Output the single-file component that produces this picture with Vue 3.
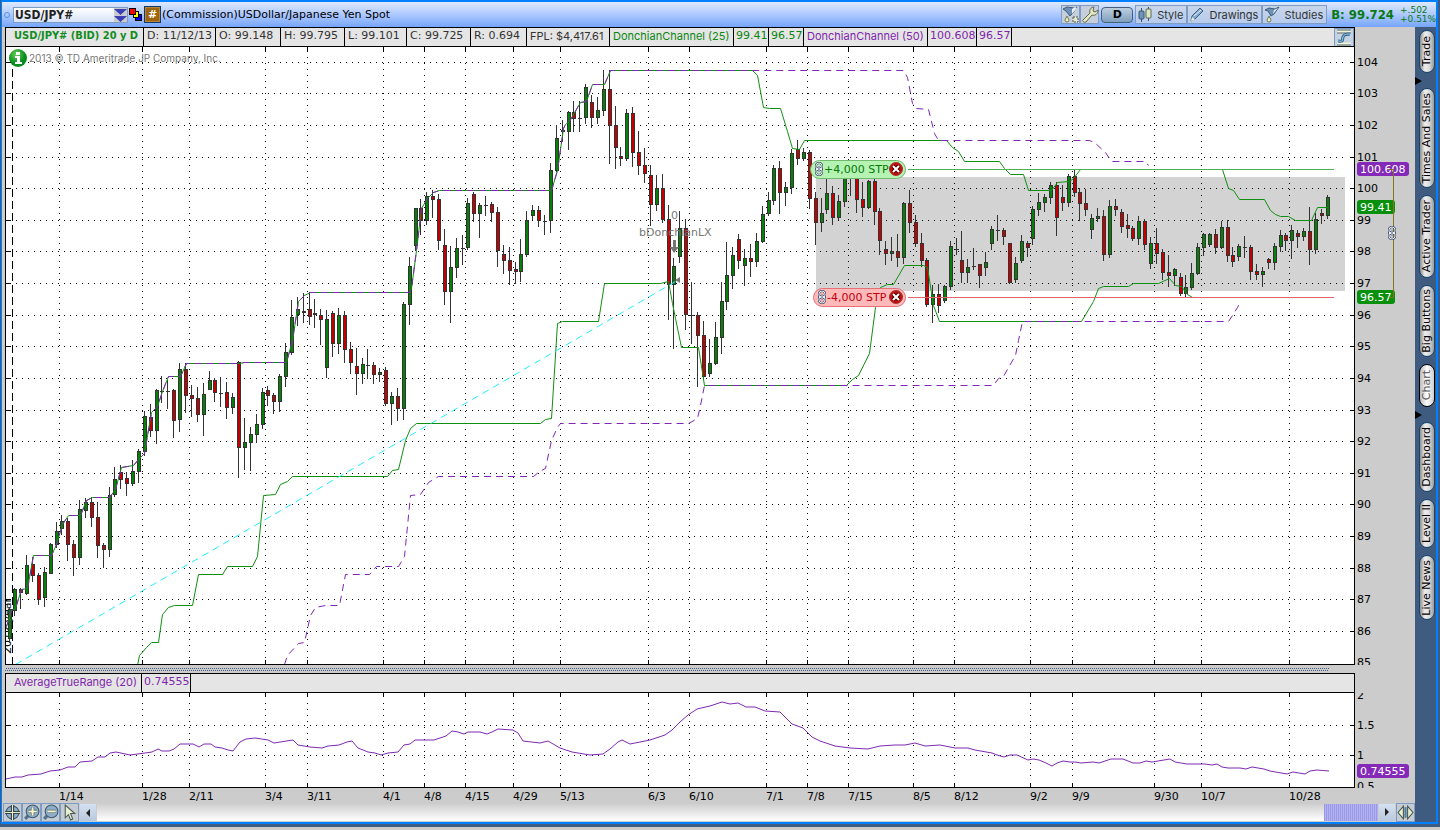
<script setup>
import { ref } from 'vue'

const symbol = ref('USD/JPY#')

const cells = [
  { text: 'USD/JPY# (BID) 20 y D', tone: 'lead' },
  { text: 'D: 11/12/13', tone: 'plain' },
  { text: 'O: 99.148', tone: 'plain' },
  { text: 'H: 99.795', tone: 'plain' },
  { text: 'L: 99.101', tone: 'plain' },
  { text: 'C: 99.725', tone: 'plain' },
  { text: 'R: 0.694', tone: 'plain' },
  { text: 'FPL: $4,417.61', tone: 'plain named' },
  { text: 'DonchianChannel (25)', tone: 'green named' },
  { text: '99.41', tone: 'green' },
  { text: '96.57', tone: 'green' },
  { text: 'DonchianChannel (50)', tone: 'purple named' },
  { text: '100.608', tone: 'purple' },
  { text: '96.57', tone: 'purple' }
]

const tabs = [
  { name: 'Trade', size: 'xs' },
  { name: 'Times And Sales', size: 'xl', arrow: true },
  { name: 'Active Trader', size: 'lg' },
  { name: 'Big Buttons', size: 'md' },
  { name: 'Chart', size: 'xs', active: true },
  { name: 'Dashboard', size: 'ml', arrow: true },
  { name: 'Level II', size: 'sm' },
  { name: 'Live News', size: 'sn' }
]

const dates = [
  [59, '1/14'], [142, '1/28'], [189, '2/11'], [265, '3/4'], [307, '3/11'], [383, '4/1'],
  [424, '4/8'], [465, '4/15'], [513, '4/29'], [560, '5/13'], [648, '6/3'], [689, '6/10'],
  [766, '7/1'], [807, '7/8'], [848, '7/15'], [913, '8/5'], [954, '8/12'], [1030, '9/2'],
  [1072, '9/9'], [1154, '9/30'], [1201, '10/7'], [1289, '10/28']
]

const prices = Array.from({ length: 20 }, (_, i) => ({
  label: 104 - i,
  y: Math.floor(62.3 + i * 31.61)
}))

// x, high, body top, body bottom, low, direction
const raw = `10 607 609 638 642 g;15 588 589 610 615 g;21 588 589 592 608 r;27 555 565 593 594 g;33 557 564 575 581 r;39 573 575 599 604 r;45 567 572 597 606 g;51 543 544 573 573 g;57 522 531 544 547 g;62 515 521 528 534 g;68 518 521 544 560 r;74 540 544 557 575 r;80 500 509 557 564 g;86 498 502 510 517 g;92 497 502 517 526 r;98 502 517 545 557 r;104 543 545 549 567 r;110 487 495 549 556 g;115 467 479 494 496 g;121 465 472 479 488 r;127 472 478 483 495 r;133 460 471 483 485 g;139 449 451 471 482 g;145 411 416 451 455 g;151 404 417 430 436 r;157 389 390 430 443 g;162 376 391 391 402 g;168 380 391 391 408 g;174 389 390 420 437 r;180 363 369 419 431 g;186 363 369 395 412 r;192 385 395 398 416 r;198 387 398 414 421 r;204 383 394 414 435 g;210 371 380 389 389 g;215 378 380 392 401 r;221 377 393 393 406 g;227 382 392 407 418 r;233 393 397 407 413 g;239 361 362 447 477 r;245 418 442 447 469 g;251 427 434 442 470 g;257 414 424 434 442 g;263 388 392 424 428 g;268 386 390 395 405 r;274 393 395 401 413 r;280 374 376 401 411 g;286 343 352 376 386 g;292 300 317 352 354 g;298 297 309 314 325 g;304 293 311 312 322 g;310 292 309 316 324 r;315 299 313 314 327 g;321 309 315 319 344 r;327 310 319 367 377 g;333 311 313 343 356 r;339 308 315 343 353 g;345 311 315 349 362 r;351 342 349 362 373 r;357 348 366 373 394 r;363 358 364 373 383 g;368 349 365 365 378 g;374 362 365 374 383 r;380 368 372 374 381 g;386 367 370 403 405 r;392 392 396 403 424 g;398 388 396 408 420 r;404 302 304 408 419 g;410 257 266 304 324 g;416 208 208 245 250 g;421 199 208 220 234 r;427 192 196 220 224 g;433 190 196 199 217 r;439 194 199 240 249 r;445 229 245 291 304 r;451 246 267 291 322 g;457 238 248 267 277 g;463 235 248 248 264 g;468 198 203 247 249 g;474 192 194 213 221 r;480 203 205 213 237 g;486 196 205 205 215 g;492 202 204 212 221 r;498 207 212 250 266 r;504 245 254 260 273 r;510 247 260 270 284 r;516 262 269 271 283 r;521 239 254 271 281 g;527 211 220 254 256 g;533 205 210 215 219 g;539 206 210 220 226 r;545 215 221 221 234 g;551 163 170 220 232 g;557 125 138 170 171 g;563 120 130 131 141 g;569 111 112 131 149 g;574 101 112 118 131 r;580 101 118 118 131 g;586 84 87 117 123 g;592 95 102 117 127 r;598 97 110 117 123 g;604 70 89 110 115 g;610 70 89 125 163 r;616 106 125 147 168 r;621 147 156 158 165 r;627 109 113 158 160 g;633 107 113 152 166 r;639 131 152 165 174 r;645 148 165 173 182 r;651 165 175 204 225 r;657 175 188 204 210 g;663 174 188 219 222 r;669 205 219 284 319 r;674 258 266 284 348 g;680 211 228 256 262 g;686 219 228 314 329 r;692 282 315 315 343 g;698 312 315 335 386 r;704 321 335 376 378 r;710 339 363 373 376 g;716 322 337 363 364 g;722 282 301 337 353 g;727 242 275 301 309 g;733 247 255 275 288 g;739 234 239 260 268 r;745 249 258 265 285 g;751 244 258 261 276 r;757 233 241 261 266 g;763 206 214 241 242 g;769 192 200 213 215 g;774 165 168 200 204 g;780 161 168 192 213 r;786 182 187 192 205 g;792 149 153 187 193 g;798 140 149 158 164 r;804 148 152 158 160 g;810 150 152 198 208 r;816 192 198 222 244 r;822 198 213 222 231 g;827 175 193 209 213 g;833 186 193 217 224 r;839 195 201 217 219 g;845 170 177 201 206 g;851 170 176 177 195 g;857 172 178 199 212 r;863 182 199 207 216 r;869 180 181 207 208 g;875 179 181 211 224 r;880 208 211 240 254 r;886 241 249 253 264 r;892 237 251 253 260 g;898 234 251 257 266 r;904 202 203 257 263 g;910 190 203 222 232 r;916 215 222 243 246 r;922 233 243 260 266 r;927 258 260 304 306 r;933 285 294 304 322 g;939 284 294 305 312 r;945 285 286 300 302 g;951 241 246 286 289 g;957 238 249 249 254 g;962 231 260 272 282 r;968 259 267 272 282 g;974 248 266 266 269 g;980 264 264 275 287 r;986 252 262 267 275 g;992 226 229 243 249 g;998 215 230 230 240 g;1004 228 230 236 244 r;1010 243 243 282 283 r;1016 257 263 279 282 g;1022 235 241 260 262 g;1028 241 243 247 256 r;1033 206 209 238 244 g;1039 193 202 209 215 g;1045 194 197 202 211 g;1051 182 185 197 203 g;1057 182 185 217 235 r;1063 185 197 202 210 r;1069 174 176 202 206 g;1075 170 176 192 196 r;1080 188 192 203 220 r;1086 189 203 209 215 r;1092 214 218 229 238 g;1098 208 216 218 221 g;1104 210 216 254 260 r;1110 200 206 254 257 g;1116 199 206 209 215 r;1122 209 212 226 232 r;1128 214 225 228 237 r;1133 226 228 238 240 r;1139 216 221 238 244 g;1145 219 221 244 249 r;1151 237 243 263 268 g;1157 228 243 253 263 r;1163 249 252 272 279 r;1169 255 272 275 286 r;1175 268 269 275 285 g;1181 273 277 293 295 r;1186 275 287 293 297 g;1192 263 273 287 289 g;1198 243 247 273 274 g;1204 233 234 247 255 g;1210 233 234 244 246 g;1216 229 234 247 253 r;1222 221 227 247 248 g;1228 220 227 255 261 r;1233 247 255 261 266 r;1239 244 246 256 260 g;1245 236 247 247 257 g;1251 245 247 271 279 r;1257 264 271 274 279 r;1263 267 271 274 286 g;1269 258 259 262 268 r;1275 243 246 262 269 g;1281 230 235 246 251 g;1286 233 235 240 250 r;1292 225 230 240 258 g;1298 230 233 236 247 r;1304 228 231 236 240 g;1310 207 231 249 264 r;1316 213 219 249 253 g;1322 209 213 215 223 r;1328 195 197 215 218 g`

const candles = raw.split(';').map((row) => {
  const [x, high, top, bottom, low, dir] = row.split(' ')
  return { x: +x, high: +high, top: +top, bottom: +bottom, low: +low, up: dir === 'g' }
})

const sharedUpper = '6,626 11,610 15,608 21,589 27,588 33,555 51,555 56,544 62,524 68,515 80,515 86,500 92,497 109,497 115,489 121,467 133,465 138,459 144,453 151,412 157,406 162,391 168,376 180,376 186,363 239,363 244,362 286,362 292,340 298,301 304,295 310,292 409,292 411,288 416,250 421,208 427,198 433,192 439,190 551,190 557,170 563,128 565,124 569,121 580,102 586,101 592,84 604,84 610,70'
const upper25 = sharedUpper + ' 752,70 757,75 763,107 769,108 780,108 787,131 792,148 799,149 804,140 946,140 952,147 958,151 964,161 999,161 1004,168 1010,174 1023,174 1028,190 1051,190 1057,182 1069,181 1073,178 1080,169 1222,169 1228,188 1233,190 1239,199 1264,199 1270,210 1275,214 1280,216 1288,216 1295,220 1311,220 1317,207 1328,207'
const upper50 = sharedUpper + ' 903,70 907,77 912,103 916,108 928,109 934,133 938,140 1089,140 1094,142 1105,152 1111,161 1145,161 1148,165'
const lower25 = '137,665 139,655 146,647 151,642 158,642 162,614 168,607 174,605 192,605 198,574 222,574 227,566 252,566 257,556 263,495 275,494 280,484 287,481 292,476 387,476 392,470 398,469 405,440 410,428 416,423 540,423 545,419 551,418 557,323 562,321 598,321 604,283 660,283 668,281 672,303 675,318 681,347 698,347 704,385 846,385 852,379 858,375 869,353 875,307 880,287 887,284 893,284 904,265 923,265 927,267 933,305 939,321 1081,321 1093,301 1098,288 1103,286 1128,286 1133,283 1158,283 1169,278 1175,285 1181,286 1187,294 1192,297'
const lower50 = '284,664 287,655 298,643 304,642 310,615 315,607 325,605 339,605 345,574 369,574 376,566 398,566 404,556 410,495 420,494 428,482 438,476 533,476 539,471 545,468 551,440 557,427 560,423 688,423 697,418 700,405 704,385 993,385 998,378 1003,376 1008,367 1015,355 1018,340 1022,321 1228,321 1232,315 1237,307 1240,301'
const atr = '6,779 15,777 22,777 28,775 41,774 50,771 60,770 68,767 75,767 80,762 92,761 98,757 105,757 110,753 116,752 130,755 145,753 152,752 158,749 162,751 169,751 174,749 180,744 193,744 199,747 204,744 211,744 215,747 222,748 228,750 233,751 240,742 246,739 255,738 268,740 274,743 293,740 298,745 310,747 322,748 328,746 339,745 347,742 352,741 358,748 368,752 375,753 381,755 388,753 398,752 404,745 410,744 415,740 434,740 446,736 452,731 458,732 464,734 468,732 480,732 487,734 492,732 498,729 513,730 518,733 523,741 540,743 548,741 560,748 572,752 590,755 603,754 610,749 618,742 622,740 630,744 640,742 650,740 665,735 672,730 680,722 688,715 697,709 710,706 722,702 730,704 738,703 746,707 755,707 765,711 780,712 792,724 803,728 812,737 820,741 835,746 850,748 868,749 880,746 895,745 905,745 915,743 925,746 940,745 955,748 968,748 975,750 992,753 997,755 1004,757 1010,755 1017,755 1028,760 1033,759 1039,760 1046,763 1052,766 1057,763 1063,761 1070,762 1075,762 1081,763 1093,762 1099,763 1111,759 1123,759 1133,763 1140,763 1146,761 1152,762 1170,759 1175,762 1187,764 1205,764 1212,765 1217,764 1222,767 1228,768 1240,768 1246,769 1252,767 1264,769 1270,771 1287,774 1293,772 1305,774 1310,771 1317,770 1329,771'
</script>

<template>
  <main class="page">
    <div class="window">
      <header class="titlebar">
        <span class="dot"></span>
        <div class="combo">
          <input v-model="symbol" aria-label="Symbol" />
          <button aria-label="Symbol list">
            <svg viewBox="0 0 13 14" width="13" height="14"><path d="M0 1h13L6.500 7zM0 8h13L6.500 14z" fill="#3a3fb4" /></svg>
          </button>
        </div>
        <button class="link-color" aria-label="Link colour">
          <svg viewBox="0 0 14 14" width="14" height="14" shape-rendering="crispEdges">
            <path d="M6.500 6.500h6v6h-6z" fill="#00f" stroke="#000" />
            <path d="M4.500 3.500h5v6h-5z" fill="#ff0" stroke="#000" />
            <path d="M.5 .5h6v6h-6z" fill="#f00" stroke="#000" />
          </svg>
        </button>
        <button class="hash" aria-label="Hash">#</button>
        <h1>(Commission)USDollar/Japanese Yen Spot</h1>
        <div class="tools">
          <button class="tool square" aria-label="Study sets">
            <svg viewBox="0 0 18 18" width="18" height="18">
              <path d="M1 3l4-2 7 1 3-1-4 6-3 3-4-5z" fill="#6d91b5" stroke="#3e5c7c" />
              <path d="M10 3l3-2 2 1-5 6z" fill="#e4eff7" /><path d="M5 10l2 4a2 2 0 1 1-4 0z" fill="#eef2cc" stroke="#6d7b56" />
              <rect x="11" y="11" width="5" height="5" fill="#dfe9cc" stroke="#555" stroke-dasharray="2 1" />
            </svg>
          </button>
          <button class="tool square" aria-label="Settings">
            <svg viewBox="0 0 18 18" width="18" height="18">
              <path d="M2 14l7-7c-1-3 1-6 4-6l-1 4 2 1 3-2c0 4-3 6-6 5l-6 7c-2 1-4-1-3-2z" fill="#e5e9c0" stroke="#5c6656" />
            </svg>
          </button>
          <button class="period">D</button>
          <button class="tool">
            <svg viewBox="0 0 16 18" width="16" height="18">
              <path d="M4.500 2v14M11.500 1v14" stroke="#3d5570" /><rect x="2" y="5" width="5" height="8" rx="1" fill="#6f95b8" stroke="#3d5570" />
              <rect x="9" y="3" width="5" height="9" rx="1" fill="#dbe8c2" stroke="#5c6656" />
            </svg>Style
          </button>
          <button class="tool">
            <svg viewBox="0 0 16 18" width="16" height="18">
              <path d="M2 15l1-5 8-8 3 3-8 8z" fill="#83aad0" stroke="#3d5f82" /><path d="M2 15l1-4 3 3z" fill="#eef2d5" /><path d="M5 10l7-6" stroke="#e5f0fa" />
            </svg>Drawings
          </button>
          <button class="tool">
            <svg viewBox="0 0 16 18" width="16" height="18">
              <path d="M1 4l4-2 6 1 4-2-5 7-3 2-3-5z" fill="#6d91b5" stroke="#3e5c7c" /><path d="M10 4l4-2-5 6z" fill="#e4eff7" />
              <path d="M5 10l2 4a2 2 0 1 1-4 0z" fill="#eef2cc" stroke="#6d7b56" />
            </svg>Studies
          </button>
        </div>
        <strong class="quote">B: 99.724</strong>
        <div class="change"><span>+.502</span><span>+0.51%</span></div>
      </header>

      <div class="body">
        <section class="chart">
          <div class="legend">
            <span v-for="(cell, i) in cells" :key="i" :class="cell.tone">{{ cell.text }}</span>
            <i></i>
            <button aria-label="Studies panel">
              <svg viewBox="0 0 18 17" width="18" height="17">
                <path d="M2 2.500h14M2 14.500h14" stroke="#f1f2d6" stroke-width="2" /><path d="M2 4h14M2 16h14M2 1h14" stroke="#64736a" />
                <path d="M3 12c6 1 4-1 5-4 1-3 4-3 7-3" fill="none" stroke="#33658d" stroke-width="3" /><path d="M3 12c6 1 4-1 5-4 1-3 4-3 7-3" fill="none" stroke="#9ed0ee" />
              </svg>
            </button>
          </div>

          <svg class="plot" viewBox="2 47 1413 619" role="img" aria-label="Daily price chart">
            <defs>
              <clipPath id="price-area"><rect x="6" y="47" width="1348" height="617" /></clipPath>
              <clipPath id="axis-area"><rect x="1355" y="47" width="60" height="618" /></clipPath>
              <radialGradient id="info" cx=".4" cy=".3"><stop offset="0" stop-color="#6ad05a" /><stop offset="1" stop-color="#078c1e" /></radialGradient>
              <symbol id="chain" viewBox="0 0 8 14">
                <rect x="1" y="1" width="6" height="7" rx="3" fill="none" stroke="#3b4766" stroke-width="2" />
                <rect x="1" y="6" width="6" height="7" rx="3" fill="none" stroke="#3b4766" stroke-width="2" />
                <rect x="1" y="1" width="6" height="7" rx="3" fill="none" stroke="#e4edf8" />
                <rect x="1" y="6" width="6" height="7" rx="3" fill="none" stroke="#e4edf8" />
                <path d="M4 4v6" stroke="#3b4766" stroke-width="2" /><path d="M4 4v6" stroke="#fff" />
              </symbol>
              <symbol id="cancel" viewBox="0 0 14 14">
                <circle cx="7" cy="7" r="6.500" fill="#c00f0f" stroke="#a33" /><path d="M4 4l6 6M10 4l-6 6" stroke="#500" stroke-width="4" /><path d="M4 4l6 6M10 4l-6 6" stroke="#fff" stroke-width="2" />
              </symbol>
            </defs>
            <path d="M6 47h1348v617h-1348z" fill="#fff" />
            <rect x="816" y="177" width="529" height="114" fill="#d3d3d3" />
            <g class="grid">
              <template v-for="p in prices.slice(0, 19)" :key="p.label">
                <path class="dots" :d="`M10 ${p.y}.5H1348`" />
                <path :d="`M6 ${p.y}.5h5M1350 ${p.y}.5h4`" />
              </template>
              <template v-for="d in dates" :key="d[0]">
                <path class="dots" :d="`M${d[0]}.500 57V658`" />
                <path :d="`M${d[0]}.500 47v5M${d[0]}.500 660v5`" />
              </template>
              <path d="M12.500 57V664" stroke-dasharray="8 4" />
            </g>
            <g clip-path="url(#price-area)">
              <text class="year" transform="translate(11 654) rotate(-90)">2012 year</text>
              <g v-for="c in candles" :key="c.x" class="candle" :class="{ up: c.up }">
                <rect class="wick" :x="c.x - 1" :y="c.high" width="1" :height="c.low - c.high + 1" />
                <rect class="frame" :x="c.x - 2" :y="c.top" width="4" :height="c.bottom - c.top + 1" />
                <rect v-if="c.bottom - c.top > 1" class="fill" :x="c.x - 1" :y="c.top + 1" width="2" :height="c.bottom - c.top - 1" />
              </g>
              <g transform="translate(.5 .5)" fill="none">
                <polyline class="channel" :points="upper25" />
                <polyline class="channel" :points="lower25" />
                <polyline class="channel wide" :points="upper50" />
                <polyline class="channel wide" :points="lower50" />
                <path class="trend" d="M15 664L675 281" />
              </g>
              <path d="M908 169.500H1334" stroke="#4fae4f" />
              <path d="M908 297.500H1334" stroke="#e06468" />
            </g>
            <g class="note">
              <text x="671" y="219">0</text>
              <text x="639" y="236">bDonchianLX</text>
              <path d="M673 240h3v7h3l-5 6-4-6h3zM675 280l5-3v6z" />
            </g>
            <circle cx="18" cy="58" r="9" fill="url(#info)" />
            <path d="M16 52h4v3h-4zM15 56h5v6h2v2h-7v-2h2v-4h-2z" fill="#fff" />
            <text class="copyright" x="29" y="62">2013 © TD Ameritrade JP Company, Inc.</text>

            <g class="pill buy">
              <rect x="810.500" y="160.500" width="95" height="18" rx="9" />
              <use href="#chain" x="815" y="162" width="8" height="14" /><text x="824" y="173">+4,000 STP</text>
              <use href="#cancel" x="889" y="162" width="14" height="14" />
            </g>
            <g class="pill sell">
              <rect x="813.500" y="288.500" width="92" height="18" rx="9" />
              <use href="#chain" x="818" y="290" width="8" height="14" /><text x="827" y="301">-4,000 STP</text>
              <use href="#cancel" x="889" y="290" width="14" height="14" />
            </g>

            <path class="edge" d="M5.500 47V664.500H1354.500V47" />
            <g clip-path="url(#axis-area)">
              <text v-for="p in prices" :key="p.label" x="1357" :y="p.y + 4">{{ p.label }}</text>
            </g>
            <g class="tag purple-tag"><rect x="1357" y="162" width="52" height="14" rx="3" /><text x="1360" y="173">100.608</text></g>
            <g class="tag"><rect x="1357" y="200" width="38" height="14" rx="3" /><text x="1360" y="211">99.41</text></g>
            <g class="tag"><rect x="1357" y="290" width="38" height="14" rx="3" /><text x="1360" y="301">96.57</text></g>
            <path d="M1389 169.500h4.500V297.500h-4.500" fill="none" stroke="#84741c" />
            <use href="#chain" x="1388" y="226" width="8" height="14" />
          </svg>

          <div class="splitter"></div>
          <div class="legend atr-legend">
            <span class="named">AverageTrueRange (20)</span><span>0.74555</span>
          </div>
          <svg class="plot" viewBox="2 693 1413 110" role="img" aria-label="Average true range">
            <defs><clipPath id="atr-axis"><rect x="1355" y="693" width="60" height="95" /></clipPath></defs>
            <path d="M6 693h1348v94h-1348z" fill="#fff" />
            <g class="grid">
              <template v-for="y in [725, 755]" :key="y">
                <path class="dots" :d="`M10 ${y}.5H1348`" /><path :d="`M6 ${y}.5h5M1350 ${y}.5h4`" />
              </template>
              <template v-for="d in dates" :key="d[0]">
                <path class="dots" :d="`M${d[0]}.500 703V780`" /><path :d="`M${d[0]}.500 693v4M${d[0]}.500 783v4`" />
              </template>
            </g>
            <polyline class="atr-line" :points="atr" />
            <path class="edge" d="M5.500 693V787.500H1354.500V693" />
            <g clip-path="url(#atr-axis)">
              <text x="1357" y="699">2</text><text x="1357" y="729">1.5</text><text x="1357" y="759">1</text><text x="1357" y="790">0.5</text>
            </g>
            <g class="tag purple-tag"><rect x="1357" y="764" width="52" height="14" rx="3" /><text x="1360" y="775">0.74555</text></g>
            <text v-for="d in dates" :key="d[0]" :x="d[0]" y="800">{{ d[1] }}</text>
          </svg>

          <footer class="bottom">
            <button class="nav" aria-label="Crosshair"><svg viewBox="0 0 16 16" width="17" height="17"><circle cx="8" cy="8" r="6" fill="#8dadc8" stroke="#3e5a74" /><path d="M8 1v14M1 8h14" stroke="#344" stroke-width="3" /><path d="M8 1v14M1 8h14" stroke="#e9efc8" /></svg></button>
            <button class="nav" aria-label="Zoom in"><svg viewBox="0 0 16 16" width="17" height="17"><path d="M2 14l3-3" stroke="#52718d" stroke-width="3" /><circle cx="9" cy="7" r="6" fill="#8dadc8" stroke="#3e5a74" /><path d="M9 3v8M5 7h8" stroke="#344" stroke-width="3" /><path d="M9 3v8M5 7h8" stroke="#f3f6d5" stroke-width="2" /></svg></button>
            <button class="nav" aria-label="Zoom out"><svg viewBox="0 0 16 16" width="17" height="17"><path d="M2 14l3-3" stroke="#52718d" stroke-width="3" /><circle cx="9" cy="7" r="6" fill="#8dadc8" stroke="#3e5a74" /><path d="M5 7h8" stroke="#344" stroke-width="3" /><path d="M5 7h8" stroke="#f3f6d5" stroke-width="2" /></svg></button>
            <button class="nav" aria-label="Pointer"><svg viewBox="0 0 16 16" width="17" height="17"><path d="M4 1v12l3-3 2 5 2-1-2-5h4z" fill="#e6efd2" stroke="#4c5a52" /></svg></button>
            <button class="scroll" aria-label="Scroll left"><svg viewBox="0 0 16 16" width="16" height="16"><path d="M10 4v8L6 8z" fill="#222" /></svg></button>
            <div class="track"><div class="thumb"></div></div>
            <button class="scroll" aria-label="Scroll right"><svg viewBox="0 0 16 16" width="16" height="16"><path d="M6 3v8l4-4z" fill="#222" /></svg></button>
            <button class="nav" aria-label="Expand"><svg viewBox="0 0 16 16" width="17" height="17"><path d="M6 2v12L1 8zM10 2v12l5-6z" fill="#e6efd2" stroke="#45544a" /><path d="M8 3v10" stroke="#4f7da5" stroke-width="2" /></svg></button>
          </footer>
        </section>

        <nav class="sidebar">
          <button v-for="t in tabs" :key="t.name" :class="[t.size, { active: t.active, arrow: t.arrow }]"><span>{{ t.name }}</span></button>
        </nav>
      </div>
    </div>
  </main>
</template>

<style>
body { margin: 0; background: #ccc; }
</style>

<style scoped>
* { box-sizing: border-box; }
.page { font: 11px/14px "DejaVu Sans", sans-serif; color: #000; padding-bottom: 3px; background: #ccc; }
.window { border: solid #3f5b80; border-width: 0 2px 3px 1px; }
button { font: inherit; color: inherit; padding: 0; border: 0; background: none; }
button svg { display: block; flex: none; }
.titlebar {
  display: flex; align-items: center; height: 27px; padding: 0 0 0 2px;
  border: solid #0080ff; border-width: 2px 2px 0 1px;
  background: linear-gradient(#dee9ff, #b3ccff 45%, #76a5fb);
}
.dot { width: 6px; height: 6px; border: 1px solid #4f94e0; border-radius: 50%; margin-right: 3px; }
.combo { display: flex; width: 115px; height: 16px; border: 1px solid #7c9cc6; background: linear-gradient(#fff, #d7e3f8); }
.combo input { width: 100px; min-width: 0; padding: 0 1px; border: 0; background: none; font: bold 12px/14px "DejaVu Sans Condensed", "DejaVu Sans", sans-serif; color: #222; }
.combo button { width: 13px; background: #c8cbd0; }
.link-color { margin: 0 1px; }
.hash { width: 17px; height: 17px; border: 1px solid #0d3a70; background: #9d650f; color: #fff; font-weight: bold; box-shadow: inset 0 0 0 1px #b88535; }
h1 { flex: 1; margin: 0 0 0 1px; font-size: 11px; font-weight: normal; white-space: nowrap; }
.tools { display: flex; align-items: center; height: 19px; }
.tool { display: flex; align-items: center; height: 19px; padding: 0 3px 0 1px; gap: 4px; border: 1px solid #7e9cc4; background: linear-gradient(#c9d6e8, #b6cbee); font: 11px/14px Inter, "DejaVu Sans", sans-serif; color: #333; }
.tool.square { width: 19px; padding: 0; background: #c6cedb; }
.period { width: 32px; height: 16px; margin: 0 2px; border: 1px solid #42607e; border-radius: 4px; background: linear-gradient(#bccfe0, #819fbc); font-weight: bold; }
.quote { margin-left: 4px; font: bold 13px/16px "DejaVu Sans Condensed", "DejaVu Sans", sans-serif; color: #087a12; white-space: nowrap; }
.change { display: flex; flex-direction: column; width: 36px; margin-left: 6px; font-size: 9px; line-height: 9px; color: #087a12; white-space: nowrap; }
.body { display: flex; border: solid #0080ff; border-width: 0 2px 2px 1px; }
.chart { flex: 1; min-width: 0; background: #ccc; }
.legend {
  display: grid; height: 20px; margin: 0 60px 0 3px; border: 1px solid #000; background: #e5e5e5; overflow: hidden;
  grid-template-columns: 138px 72px 65px 64px 62px 64px 56px 83px 124px 35px 35px 124px 49px 35px 1fr 20px;
}
.legend span { padding-left: 3px; border-right: 1px solid #000; line-height: 16px; white-space: nowrap; color: #333; }
.legend .lead { padding-left: 8px; font-family: "DejaVu Sans Condensed", "DejaVu Sans", sans-serif; font-weight: bold; color: #128c22; }
.legend .green { padding-left: 2px; color: #0a870f; }
.legend .purple, .atr-legend span { padding-left: 2px; color: #7f26ad; }
.legend .named { padding-left: 3px; font-family: Inter, "DejaVu Sans", sans-serif; }
.legend button { border: 1px solid #7e9cc4; background: #c5d2e2; }
.atr-legend { grid-template-columns: 136px 49px; }
.atr-legend .named { padding-left: 8px; }
.plot { display: block; width: 100%; height: auto; }
.plot text { font: 11px "DejaVu Sans", sans-serif; }
.grid path, .edge { stroke: #000; fill: none; shape-rendering: crispEdges; }
.grid .dots { stroke-dasharray: 1 5; }
.candle { shape-rendering: crispEdges; }
.wick, .frame { fill: #333; }
.fill { fill: #c60000; }
.up .fill { fill: #068006; }
.channel { stroke: #109010; }
.channel.wide { stroke: #8026b4; stroke-dasharray: 7 5; }
.trend { stroke: #20f0ff; stroke-dasharray: 7 5; }
.note, .copyright { fill: #777; }
.plot .copyright { font: 10px Inter, "DejaVu Sans", sans-serif; }
.pill.buy rect { fill: #b5f3b3; stroke: #70b96e; }
.pill.sell rect { fill: #ffb9b9; stroke: #e57076; }
.pill.buy text { fill: #087808; }
.pill.sell text { fill: #c00010; }
.tag rect { fill: #08900c; }
.tag.purple-tag rect { fill: #8429b8; }
.tag text { fill: #fff; }
.atr-line { fill: none; stroke: #7f29b2; }
.splitter { height: 7px; margin: 0 86px 0 3px; background: repeating-conic-gradient(#3f5b80 0 25%, #ccc 0 50%) 0 2px / 2px 3px repeat-x; }
.bottom { display: flex; height: 19px; padding-left: 1px; align-items: stretch; }
.nav { width: 19px; border: 1px solid #7e9cc4; background: #c5cbd2; }
.scroll { width: 16px; margin: 1px; background: linear-gradient(#d5e1f2, #b8c8dc); }
.track { flex: 1; display: flex; justify-content: flex-end; margin: 1px 0; background: linear-gradient(#cfcfcf, #fff); }
.thumb { width: 54px; background: repeating-linear-gradient(90deg, #9a9ae8 0 1px, #b2b2f0 1px 2px); }
.sidebar { width: 21px; padding: 3px 1px 0 4px; display: flex; flex-direction: column; gap: 7px; background: #3f5b80; }
.sidebar button {
  position: relative; width: 16px; flex: none; border: 1px solid #17466f; border-radius: 8px;
  background: linear-gradient(90deg, #8d8d8d, #eee 35%, #ddd 65%, #999);
  display: flex; align-items: center; justify-content: center; white-space: nowrap;
}
.sidebar span { writing-mode: vertical-rl; transform: rotate(180deg); line-height: 14px; }
.sidebar .xs { height: 43px; }
.sidebar .sm { height: 49px; }
.sidebar .sn { height: 65px; }
.sidebar .md { height: 72px; }
.sidebar .ml { height: 70px; }
.sidebar .lg { height: 83px; }
.sidebar .xl { height: 100px; }
.sidebar .arrow { margin-top: 8px; }
.sidebar .arrow::before { content: ""; position: absolute; left: -5px; top: -12px; border: solid transparent; border-width: 4px 0 4px 7px; border-left-color: #000; }
.sidebar .active { color: #555; border-color: #000; background: linear-gradient(90deg, #bbb, #fff 50%, #ccc); }
</style>
